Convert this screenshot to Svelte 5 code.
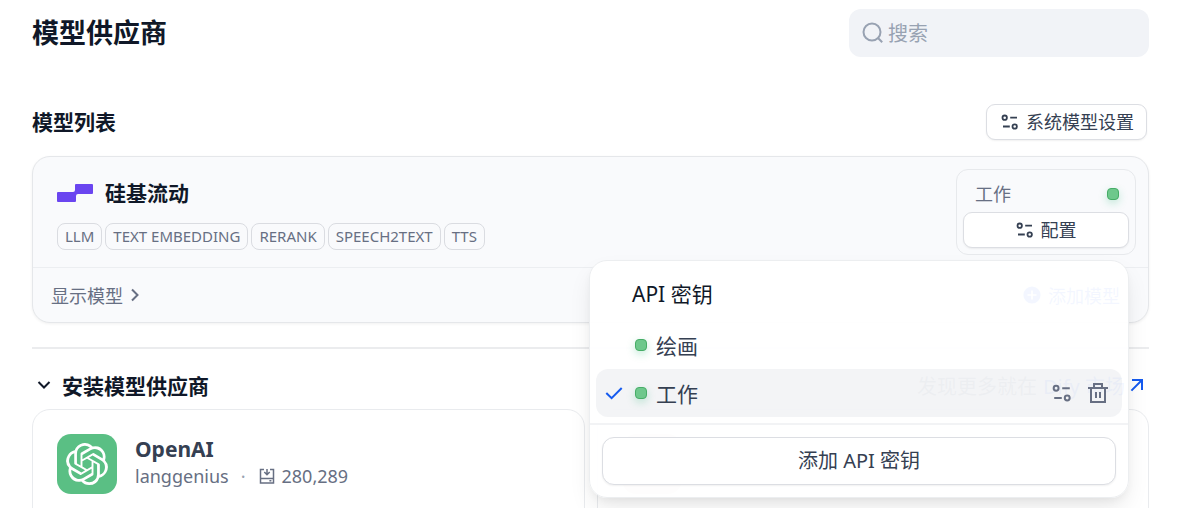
<script>
  const tags = ['LLM', 'TEXT EMBEDDING', 'RERANK', 'SPEECH2TEXT', 'TTS'];
  const keys = ['绘画', '工作'];
  let selected = $state('工作');
</script>

{#snippet sliders(size)}
  <svg class="ico" width={size} height={size} viewBox="0 0 18 18" fill="none" stroke="currentColor" stroke-width="1.8" aria-hidden="true">
    <circle cx="3.7" cy="4.7" r="2.2" />
    <path d="M9.2 4.7H16M2 13.5H8.8" />
    <circle cx="13.7" cy="13.5" r="2.2" />
  </svg>
{/snippet}

<main>
  <header class="row top">
    <h1>模型供应商</h1>
    <label class="search">
      <svg class="ico" width="24" height="24" viewBox="0 0 24 24" fill="none" stroke="currentColor" stroke-width="2" aria-hidden="true">
        <circle cx="11" cy="11" r="8.5" /><path d="M17 17L21.2 21.2" />
      </svg>
      <input type="text" placeholder="搜索" aria-label="搜索" />
    </label>
  </header>

  <div class="row list-head">
    <h2>模型列表</h2>
    <button class="btn system">{@render sliders(18)}<span>系统模型设置</span></button>
  </div>

  <section class="card provider">
    <div class="provider-main">
      <div>
        <div class="brand">
          <svg width="36" height="18" viewBox="0 0 36 18" aria-hidden="true">
            <path fill="#6a45f0" d="M19 0H35a1 1 0 0 1 1 1V9a1 1 0 0 1-1 1H21q-2 0-2 2V17a1 1 0 0 1-1 1H1a1 1 0 0 1-1-1V9a1 1 0 0 1 1-1H16q2 0 2-2V1a1 1 0 0 1 1-1Z" />
          </svg>
          <h2>硅基流动</h2>
        </div>
        <div class="tags">
          {#each tags as tag}<span class="tag">{tag}</span>{/each}
        </div>
      </div>
      <div class="credential">
        <div class="current"><span>工作</span><i class="dot"></i></div>
        <div class="anchor">
          <button class="btn config">{@render sliders(18)}<span>配置</span></button>
          <div class="popover">
            <div class="keys">
              <h3>API 密钥</h3>
              {#each keys as key}
                <div class="key" class:active={key === selected}>
                  <button class="pick" onclick={() => (selected = key)}>
                    <span class="check">
                      {#if key === selected}
                        <svg class="ico" width="18" height="18" viewBox="0 0 18 18" fill="none" stroke="#155aef" stroke-width="2" aria-hidden="true"><path d="M1.3 9L6.6 14.2L16.7 4" /></svg>
                      {/if}
                    </span>
                    <i class="dot"></i>
                    <span>{key}</span>
                  </button>
                  {#if key === selected}
                    <button class="act" aria-label="编辑">{@render sliders(20)}</button>
                    <button class="act" aria-label="删除">
                      <svg class="ico" width="24" height="24" viewBox="0 0 24 24" fill="none" stroke="currentColor" stroke-width="2" aria-hidden="true">
                        <path d="M2 7H22M5 7V21H19V7M8 7V3H16V7M10 11V17M14 11V17" />
                      </svg>
                    </button>
                  {/if}
                </div>
              {/each}
            </div>
            <div class="popover-foot"><button class="btn add">添加 API 密钥</button></div>
          </div>
        </div>
      </div>
    </div>
    <div class="provider-foot">
      <button class="plain">显示模型
        <svg class="ico" width="18" height="18" viewBox="0 0 18 18" fill="none" stroke="currentColor" stroke-width="2" aria-hidden="true"><path d="M6 3.5L11.5 9L6 14.5" /></svg>
      </button>
      <button class="plain blue">
        <svg class="ico" width="18" height="18" viewBox="0 0 18 18" aria-hidden="true"><circle cx="9" cy="9" r="8.6" fill="currentColor" /><path d="M9 4.5V13.5M4.5 9H13.5" stroke="#fff" stroke-width="1.6" /></svg>
        添加模型
      </button>
    </div>
  </section>

  <hr />

  <div class="row install">
    <button class="fold">
      <svg class="ico" width="24" height="24" viewBox="0 0 24 24" fill="none" stroke="currentColor" stroke-width="2" aria-hidden="true"><path d="M6.5 9L12 14.5L17.5 9" /></svg>
      <span>安装模型供应商</span>
    </button>
    <p class="more">发现更多就在
      <a href="#market">Dify 市场
        <svg class="ico" width="18" height="18" viewBox="0 0 18 18" fill="none" stroke="currentColor" stroke-width="2" aria-hidden="true"><path d="M4 4H14V14M14 4L3.4 14.6" /></svg>
      </a>
    </p>
  </div>

  <div class="grid">
    <article class="card plugin">
      <div class="logo">
        <svg width="42" height="42" viewBox="0 0 24 24" fill="#fff" aria-hidden="true">
          <path d="M22.2819 9.8211a5.9847 5.9847 0 0 0-.5157-4.9108 6.0462 6.0462 0 0 0-6.5098-2.9A6.0651 6.0651 0 0 0 4.9807 4.1818a5.9847 5.9847 0 0 0-3.9977 2.9 6.0462 6.0462 0 0 0 .7427 7.0966 5.98 5.98 0 0 0 .511 4.9107 6.051 6.051 0 0 0 6.5146 2.9001A5.9847 5.9847 0 0 0 13.2599 24a6.0557 6.0557 0 0 0 5.7718-4.2058 5.9894 5.9894 0 0 0 3.9977-2.9001 6.0557 6.0557 0 0 0-.7475-7.0729zm-9.022 12.6081a4.4755 4.4755 0 0 1-2.8764-1.0408l.1419-.0804 4.7783-2.7582a.7948.7948 0 0 0 .3927-.6813v-6.7369l2.02 1.1686a.071.071 0 0 1 .038.052v5.5826a4.504 4.504 0 0 1-4.4945 4.4944zm-9.6607-4.1254a4.4708 4.4708 0 0 1-.5346-3.0137l.142.0852 4.783 2.7582a.7712.7712 0 0 0 .7806 0l5.8428-3.3685v2.3324a.0804.0804 0 0 1-.0332.0615L9.74 19.9502a4.4992 4.4992 0 0 1-6.1408-1.6464zM2.3408 7.8956a4.485 4.485 0 0 1 2.3655-1.9728V11.6a.7664.7664 0 0 0 .3879.6765l5.8144 3.3543-2.0201 1.1685a.0757.0757 0 0 1-.071 0l-4.8303-2.7865A4.504 4.504 0 0 1 2.3408 7.872zm16.5963 3.8558L13.1038 8.364 15.1192 7.2a.0757.0757 0 0 1 .071 0l4.8303 2.7913a4.4944 4.4944 0 0 1-.6765 8.1042v-5.6772a.79.79 0 0 0-.407-.667zm2.0107-3.0231l-.142-.0852-4.7735-2.7818a.7759.7759 0 0 0-.7854 0L9.409 9.2297V6.8974a.0662.0662 0 0 1 .0284-.0615l4.8303-2.7866a4.4992 4.4992 0 0 1 6.6802 4.66zM8.3065 12.863l-2.02-1.1638a.0804.0804 0 0 1-.038-.0567V6.0742a4.4992 4.4992 0 0 1 7.3757-3.4537l-.142.0805L8.704 5.459a.7948.7948 0 0 0-.3927.6813zm1.0976-2.3654l2.602-1.4998 2.6069 1.4998v2.9994l-2.5974 1.4997-2.6067-1.4997Z" />
        </svg>
      </div>
      <div class="info">
        <h4>OpenAI</h4>
        <div class="meta">
          <span>langgenius</span><span class="sep">·</span>
          <svg class="ico" width="18" height="18" viewBox="0 0 18 18" fill="none" stroke="currentColor" stroke-width="1.5" aria-hidden="true">
            <path d="M6 2.5H2.5V16H15.5V2.5H12M2.5 11.5H15.5M9 2V7.6M6.3 5L9 7.7L11.7 5M11.4 13.8H13.4" />
          </svg>
          <span class="count">280,289</span>
        </div>
      </div>
    </article>
    <article class="card plugin"><div class="logo warm"></div></article>
  </div>
</main>

<style>
  :global(body) {
    margin: 0;
    background: #fff;
  }
  main {
    box-sizing: border-box;
    height: 100vh;
    overflow: hidden;
    padding: 9px 35px 0 32px;
    font-family: "Noto Sans", "Noto Sans CJK SC", sans-serif;
    color: #101828;
  }
  main :global(*) { box-sizing: border-box; }
  h1, h2, h3, h4, p { margin: 0; }
  button, input { font: inherit; color: inherit; }
  button {
    border: 0;
    padding: 0;
    background: none;
    cursor: pointer;
    white-space: nowrap;
  }
  .ico { display: block; flex: none; }
  .row {
    display: flex;
    align-items: center;
    justify-content: space-between;
  }
  h1 { font-size: 27px; line-height: 36px; font-weight: 700; }
  h2 { font-size: 21px; line-height: 30px; font-weight: 700; }
  .search {
    display: flex;
    align-items: center;
    gap: 3px;
    width: 300px;
    height: 48px;
    padding: 0 12px;
    border-radius: 12px;
    background: #f1f3f7;
    color: #98a2b2;
  }
  .search input {
    flex: 1;
    min-width: 0;
    padding: 0;
    border: 0;
    outline: 0;
    background: none;
    font-size: 20px;
  }
  .search input::placeholder { color: #98a2b2; opacity: 1; }
  .list-head {
    margin-top: 47px;
    padding-right: 2px;
  }
  .btn {
    display: flex;
    align-items: center;
    justify-content: center;
    gap: 7px;
    height: 36px;
    border: 1px solid #dcdee3;
    border-radius: 9px;
    background: #fff;
    box-shadow: 0 1px 2px rgba(9, 9, 11, 0.06);
    color: #354052;
    font-size: 18px;
    line-height: 24px;
  }
  .system { padding: 0 12px 0 14px; }
  .card {
    border: 1px solid #e9ebee;
    border-radius: 18px;
    background: #fff;
  }
  .provider {
    margin-top: 16px;
    background: #f9fafc;
    border-color: #e5e7ea;
    box-shadow: 0 1px 3px rgba(9, 9, 11, 0.06);
  }
  .provider-main {
    display: flex;
    justify-content: space-between;
    padding: 12px 12px 12px 24px;
  }
  .brand {
    display: flex;
    align-items: center;
    gap: 12px;
    padding-top: 9px;
  }
  .tags {
    display: flex;
    gap: 3px;
    margin-top: 15px;
  }
  .tag {
    height: 27px;
    padding: 0 7px;
    border: 1px solid #dadce1;
    border-radius: 8px;
    color: #676f83;
    font-size: 15px;
    line-height: 25px;
    white-space: nowrap;
  }
  .credential {
    width: 180px;
    height: 86px;
    padding: 6px;
    border: 1px solid #e7e9ec;
    border-radius: 12px;
  }
  .current {
    display: flex;
    align-items: center;
    justify-content: space-between;
    height: 36px;
    padding: 0 10px 0 12px;
    color: #676f83;
    font-size: 18px;
    line-height: 24px;
  }
  .dot {
    flex: none;
    width: 12px;
    height: 12px;
    border: 1px solid #47ad67;
    border-radius: 4px;
    background: #6ec88c;
    box-shadow: 0 3px 8px rgba(23, 178, 106, 0.25);
  }
  .anchor { position: relative; }
  .config { width: 100%; }
  .popover {
    position: absolute;
    z-index: 5;
    top: 48px;
    right: 0;
    width: 540px;
    border: 1px solid #eceef0;
    border-radius: 18px;
    background: rgba(255, 255, 255, 0.95);
    box-shadow: 0 12px 24px -4px rgba(9, 9, 11, 0.1), 0 4px 9px -2px rgba(9, 9, 11, 0.05);
    color: #354052;
    font-size: 21px;
  }
  .keys {
    padding: 6px;
    border-bottom: 2px solid #f2f3f5;
  }
  h3 {
    height: 54px;
    padding-left: 36px;
    color: #101828;
    font-size: 21px;
    font-weight: 400;
    line-height: 54px;
  }
  .key {
    display: flex;
    align-items: center;
    height: 48px;
    padding-right: 12px;
    border-radius: 12px;
  }
  .active { background: rgba(200, 205, 212, 0.22); }
  .pick {
    display: flex;
    flex: 1;
    align-items: center;
    gap: 9px;
    height: 100%;
    padding-left: 9px;
  }
  .check { width: 21px; }
  .act {
    display: grid;
    place-items: center;
    width: 36px;
    height: 36px;
    color: #676f83;
  }
  .act:last-child { margin-right: -6px; }
  .popover-foot { padding: 12px; }
  .add {
    width: 100%;
    height: 48px;
    border-radius: 12px;
    font-size: 20px;
  }
  .provider-foot {
    display: flex;
    align-items: center;
    justify-content: space-between;
    height: 55px;
    padding: 0 28px 0 18px;
    border-top: 1px solid #eceef1;
    color: #676f83;
    font-size: 18px;
  }
  .plain {
    display: flex;
    align-items: center;
    gap: 3px;
  }
  .blue { gap: 7px; color: #155aef; }
  hr {
    height: 2px;
    margin: 24px 0 0;
    border: 0;
    background: #ebecee;
  }
  .install {
    height: 60px;
    padding-top: 12px;
  }
  .fold {
    display: flex;
    align-items: center;
    gap: 6px;
    font-size: 21px;
    font-weight: 700;
  }
  .more {
    display: flex;
    align-items: center;
    gap: 6px;
    padding-right: 3px;
    color: #676f83;
    font-size: 20px;
  }
  .more a {
    display: flex;
    align-items: center;
    gap: 3px;
    color: #155aef;
    text-decoration: none;
  }
  .grid {
    display: grid;
    grid-template-columns: 1fr 1fr;
    gap: 12px;
  }
  .plugin {
    display: flex;
    gap: 18px;
    height: 180px;
    padding: 24px;
  }
  .logo {
    display: grid;
    flex: none;
    place-items: center;
    width: 60px;
    height: 60px;
    border-radius: 14px;
    background: #5abf84;
  }
  .warm { background: #e5d8d0; }
  h4 {
    color: #354052;
    font-size: 21px;
    font-weight: 700;
    line-height: 30px;
  }
  .meta {
    display: flex;
    align-items: center;
    color: #676f83;
    font-size: 18px;
    line-height: 24px;
  }
  .sep { padding: 0 12px; color: #98a2b2; }
  .count { margin-left: 6px; }
</style>
